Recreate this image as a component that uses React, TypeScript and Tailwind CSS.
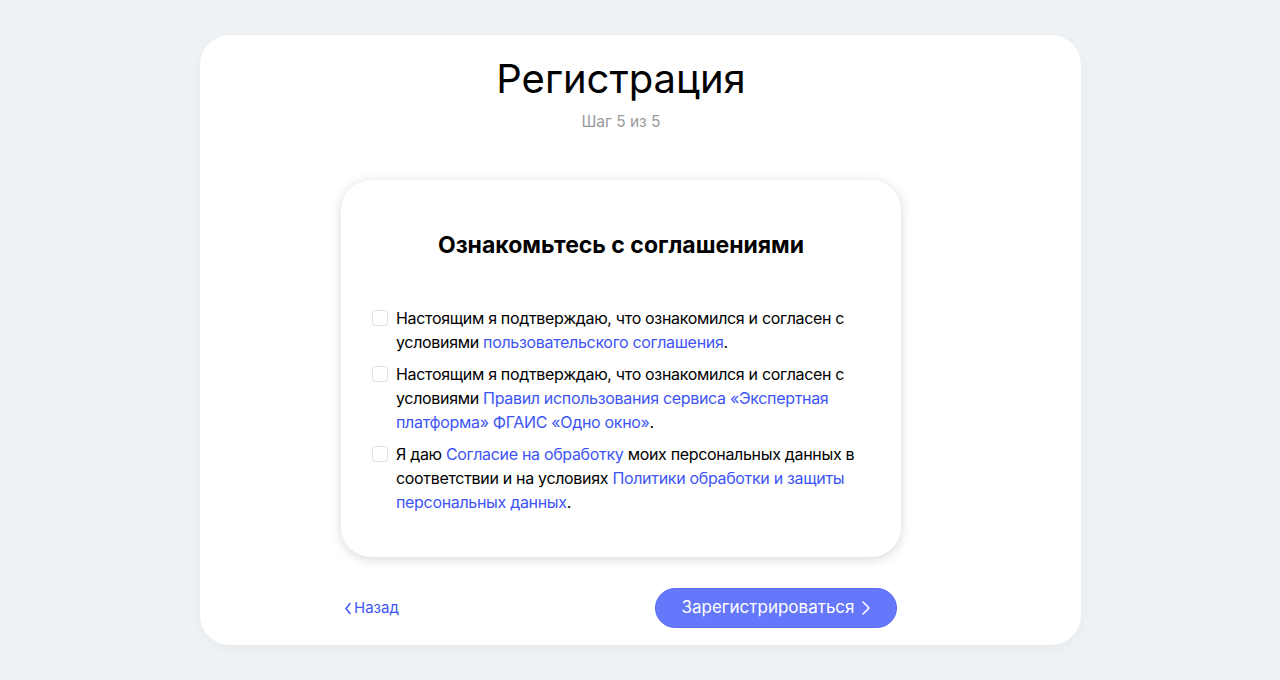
import React from "react";

const Link = ({ children }: { children: React.ReactNode }) => (
  <a href="#" className="text-[#3d55f5]">
    {children}
  </a>
);

const Agreement = ({ children }: { children: React.ReactNode }) => (
  <label className="flex items-start gap-[8px]">
    <span className="mt-[4px] h-[16px] w-[16px] shrink-0 rounded-[3px] border border-[#dbe1ee] bg-white" />
    <span className="text-[16px] leading-[24px] tracking-[-0.32px] text-black">{children}</span>
  </label>
);

const App = () => {
  return (
    <div
      className="min-h-[680px] bg-[#eff2f5] pt-[35px]"
      style={{ fontFamily: "Inter, 'Noto Sans', sans-serif" }}
    >
      <div className="mx-auto flex h-[610px] w-[881px] flex-col items-center rounded-[30px] bg-white pt-[20px] pr-[38px] shadow-[0_4px_14px_rgba(0,0,0,0.03)]">
        <h1 className="text-[40px] leading-[48px] font-normal text-black">Регистрация</h1>
        <p className="mt-[9px] text-[15.5px] leading-[20px] text-[#9a9a9a]">Шаг 5 из 5</p>

        <div className="mt-[48px] w-[560px] rounded-[30px] bg-white px-[31px] pt-[50px] pb-[43px] shadow-[0_2px_12px_rgba(0,0,0,0.16)]">
          <h2 className="text-center text-[23px] leading-[30px] font-bold text-black">
            Ознакомьтесь с соглашениями
          </h2>
          <div className="mt-[46px] flex flex-col gap-[8px]">
            <Agreement>
              Настоящим я подтверждаю, что ознакомился и согласен с условиями{" "}
              <Link>пользовательского соглашения</Link>.
            </Agreement>
            <Agreement>
              Настоящим я подтверждаю, что ознакомился и согласен с условиями{" "}
              <Link>Правил использования сервиса «Экспертная платформа» ФГАИС «Одно окно»</Link>.
            </Agreement>
            <Agreement>
              Я даю <Link>Согласие на обработку</Link> моих персональных данных в соответствии и на
              условиях <Link>Политики обработки и защиты персональных данных</Link>.
            </Agreement>
          </div>
        </div>

        <div className="mt-[31px] flex w-[560px] items-center justify-between pl-[3px] pr-[4px]">
          <a href="#" className="flex items-center gap-[2px] text-[15px] text-[#3d55f5]">
            <svg width="8" height="13" viewBox="0 0 8 13" fill="none">
              <path d="M6 1.5L2 6.5L6 11.5" stroke="#3d55f5" strokeWidth="1.5" strokeLinecap="round" strokeLinejoin="round" />
            </svg>
            Назад
          </a>
          <button className="flex h-[40px] w-[242px] items-center justify-center gap-[6px] rounded-full border border-[#5b6cf2] bg-[#6577fb] text-[17px] text-white">
            Зарегистрироваться
            <svg width="10" height="16" viewBox="0 0 10 16" fill="none">
              <path d="M2 2L8 8L2 14" stroke="white" strokeWidth="1.6" strokeLinecap="round" strokeLinejoin="round" />
            </svg>
          </button>
        </div>
      </div>
    </div>
  );
};

export default App;
